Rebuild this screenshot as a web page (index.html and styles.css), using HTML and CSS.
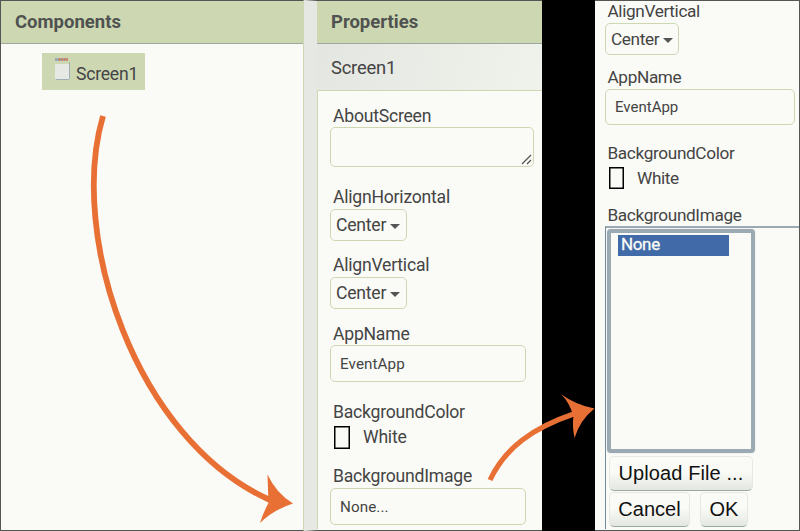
FILE: index.html
```html
<!DOCTYPE html>
<html lang="en">
<head>
<meta charset="utf-8">
<title>Screen properties</title>
<link rel="stylesheet" href="styles.css">
</head>
<body>
<main class="stage">
  <section class="panel components">
    <h2 class="bar">Components</h2>
    <div class="node">
      <svg class="node-icon" width="17" height="23" viewBox="0 0 17 23"><path fill="#e6e9e3" d="M1 6h14v15H1z"/><path fill="none" stroke="#9fafb5" d="M2 21.500h13M15.500 4v17"/><path stroke="#9aa9b2" stroke-width="3" d="M1 1.500h13"/><path stroke="#e87035" stroke-width="2" stroke-dasharray="1.500 1" d="M5 1.500h9"/></svg>
      <span>Screen1</span>
    </div>
  </section>
  <section class="panel properties">
    <h2 class="bar">Properties</h2>
    <div class="subject">Screen1</div>
    <div class="form">
      <div class="field about"><div class="label">AboutScreen</div><div class="area"><svg width="11" height="11" viewBox="0 0 11 11"><path d="M1 10L10 1M6 10L10 6" stroke="#555" stroke-width="1.300"/></svg></div></div>
      <div class="field horizontal"><div class="label">AlignHorizontal</div><div class="select">Center<i></i></div></div>
      <div class="field vertical"><div class="label">AlignVertical</div><div class="select">Center<i></i></div></div>
      <div class="field name"><div class="label">AppName</div><div class="input">EventApp</div></div>
      <div class="field color"><div class="label">BackgroundColor</div><div class="swatch"><b></b>White</div></div>
      <div class="field image"><div class="label">BackgroundImage</div><div class="input">None...</div></div>
    </div>
  </section>
  <section class="panel detail">
    <div class="field"><div class="label">AlignVertical</div><div class="select">Center<i></i></div></div>
    <div class="field name"><div class="label">AppName</div><div class="input">EventApp</div></div>
    <div class="field color"><div class="label">BackgroundColor</div><div class="swatch"><b></b>White</div></div>
    <div class="field image"><div class="label">BackgroundImage</div></div>
    <div class="chooser">
      <div class="list"><div class="option">None</div></div>
      <div class="buttons">
        <div class="button upload">Upload File ...</div>
        <div class="button cancel">Cancel</div>
        <div class="button ok">OK</div>
      </div>
    </div>
  </section>
  <svg class="arrows" width="800" height="531" viewBox="0 0 800 531">
    <path class="stroke" d="M103 116C68 235 135 440 270 500"/>
    <path class="head" d="M267.500 474.500Q276 493 293 503.500Q273 510 260 523Q263 513 268.500 503Q268 490 267.500 474.500z"/>
    <path class="stroke thin" d="M490 480C505 448 532 428 575 413.500"/>
    <path class="head" d="M561.500 394.500Q576 405 594.500 408.500Q580 420 574.500 438Q572 426 573.500 416Q569 402 561.500 394.500z"/>
  </svg>
</main>
</body>
</html>
```
FILE: styles.css
```css
* { box-sizing: border-box; }
body { margin: 0; }
.stage {
  position: relative;
  display: grid;
  grid-template-columns: 304px 291px 205px;
  width: 800px;
  height: 531px;
  background: #000;
  font: 17.6px/20px Roboto, sans-serif;
  letter-spacing: -.23px;
  color: #444;
  overflow: hidden;
}
.panel {
  background: #fafbf6;
  border-top: 1px solid #555;
  border-bottom: 1px solid #555;
  height: 531px;
  min-width: 0;
}
.components { border-left: 1px solid #555; border-right: 1px solid #cdd8b3; }
.properties { width: 238px; border-left: 13px solid #e6e9e3; }
.bar {
  margin: 0;
  height: 43px;
  padding-left: 14px;
  font-size: 18.5px;
  letter-spacing: 0;
  line-height: 43px;
  color: #505250;
  background: #cdd8b3;
  border-bottom: 1px solid #9ba89f;
}
.node {
  display: flex;
  gap: 5px;
  width: 103px;
  height: 37px;
  margin: 9px 0 0 41px;
  padding: 5px 0 0 12px;
  background: #cdd8b3;
}
.node span { padding-top: 6px; }
.subject {
  height: 47px;
  padding-left: 14px;
  line-height: 48px;
  font-size: 18.4px;
  background: linear-gradient(100deg, #e4e7e1, #f0f2ec);
  border-bottom: 1px solid #cdd8b3;
}
.form { border-left: 1px solid #cdd8b3; height: 438px; padding: 14px 8px 0 12px; }
.field { display: flex; flex-direction: column; }
.label { height: 22px; padding-left: 3px; line-height: 20px; }
.about .label, .properties .name .label { line-height: 22px; }
.area, .select, .input { border: 1px solid #cdd8b3; border-radius: 5px; background: #fafbf6; }
.area { display: flex; align-items: flex-end; justify-content: flex-end; height: 40px; padding: 1px; }
.select { display: flex; align-items: center; gap: 4px; width: 77px; height: 32px; padding-left: 5px; }
.select i { border: 5.5px solid transparent; border-top-color: #555; border-bottom: 0; margin-top: 3px; }
.input { width: 196px; height: 37px; padding-left: 9px; line-height: 36px; font-size: 15.2px; letter-spacing: .1px; }
.horizontal { margin-top: 20px; }
.vertical { margin-top: 14px; }
.name { margin-top: 14px; }
.color { margin-top: 20px; }
.image { margin-top: 16px; }
.swatch { display: flex; align-items: center; gap: 13px; height: 26px; padding-left: 4px; }
.swatch b { width: 16px; height: 23px; border: 1px solid #000; box-shadow: inset 0 0 0 .5px #000; }
.detail { border-right: 1px solid #555; padding-left: 10px; font-size: 17.2px; letter-spacing: -.35px; }
.detail .label { padding-left: 2.5px; }
.detail .select { width: 74px; height: 32px; }
.detail .name { margin-top: 12px; }
.detail .input { width: 190px; height: 36px; line-height: 35px; font-size: 15px; letter-spacing: 0; }
.detail .color { margin-top: 18px; }
.detail .swatch b { height: 22px; width: 15px; }
.detail .swatch { height: 25px; }
.detail .image { margin-top: 14px; }
.detail .image .label { line-height: 22px; }
.chooser {
  height: 303px;
  border-top: 2px solid #9aa9b2;
  border-left: 1px solid #75899c;
  padding: 1px 0 0 1px;
}
.list {
  width: 148px;
  height: 224px;
  border: 4px solid #9aa9b2;
  border-radius: 4px;
  padding: 2px 0 0 7px;
  box-shadow: 0 0 1px #9aa9b2;
}
.option { width: 111px; height: 21px; padding-left: 3px; line-height: 19px; color: #fafbf6; background: #406aa8; font-size: 17px; -webkit-text-stroke: .3px; }
.buttons {
  display: grid;
  grid-template-columns: 81px 48px;
  gap: 1px 10px;
  padding: 3px 0 0 2px;
  font: 20px/33px "Liberation Sans", sans-serif;
  letter-spacing: 0;
  color: #111;
}
.button {
  height: 35px;
  text-align: center;
  white-space: nowrap;
  border: 1px solid #e6e9e3;
  border-bottom-color: #9aa9a5;
  border-radius: 5px;
  background: linear-gradient(#fafbf6 45%, #e4e7e1);
}
.upload { grid-column: 1 / 3; width: 144px; letter-spacing: .1px; }
.arrows { position: absolute; inset: 0; }
.stroke { fill: none; stroke: #e87035; stroke-width: 5.8; }
.thin { stroke-width: 5.2; }
.head { fill: #e87035; }
```
